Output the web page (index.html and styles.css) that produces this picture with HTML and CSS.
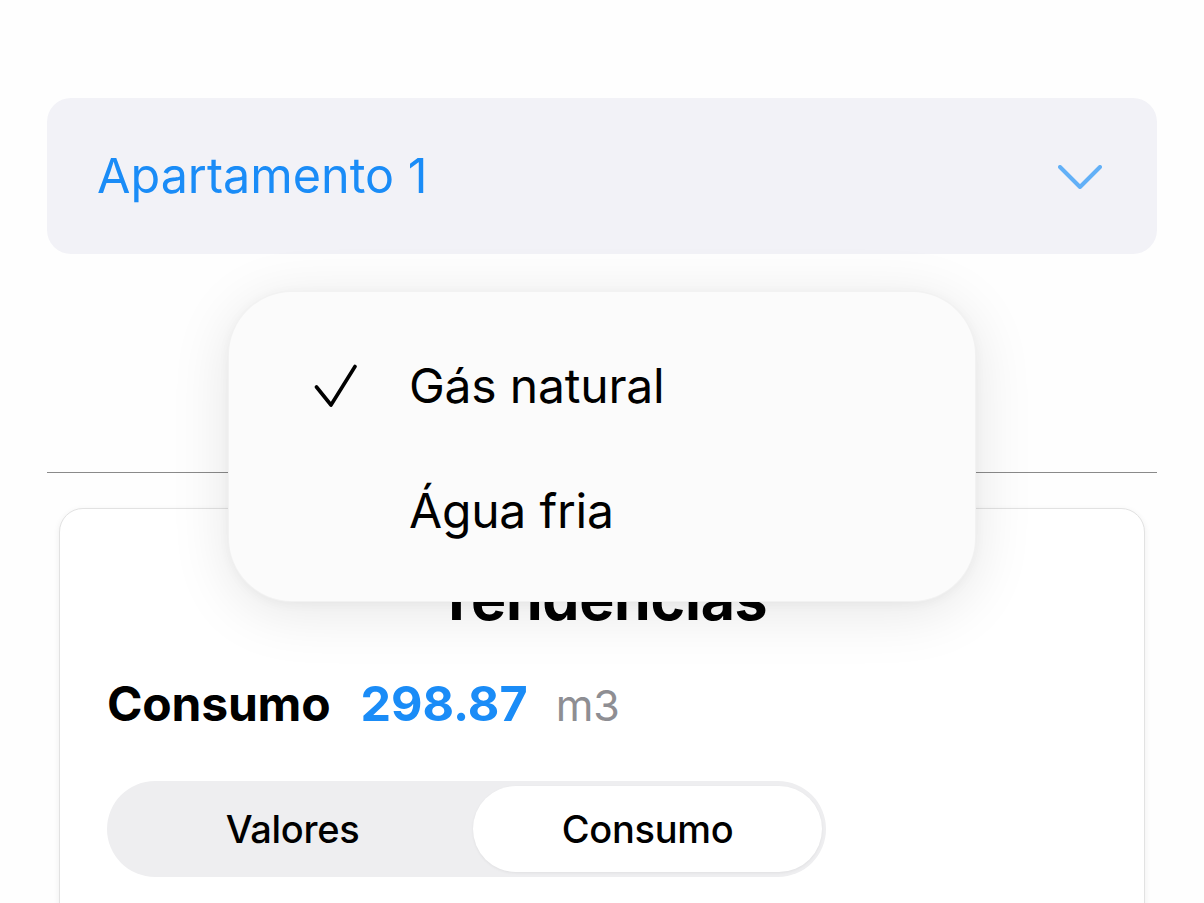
FILE: index.html
```html
<!DOCTYPE html>
<html lang="pt">
<head>
<meta charset="utf-8">
<title>Tendencias</title>
<link rel="stylesheet" href="styles.css">
</head>
<body>
<div class="screen">
  <div class="picker">
    <span class="picker-label">Apartamento 1</span>
    <svg class="chevron" width="44" height="24" viewBox="0 0 44 24"><path d="M2 2 L22 22 L42 2" fill="none" stroke="#62b0f7" stroke-width="4" stroke-linecap="round" stroke-linejoin="round"/></svg>
  </div>
  <div class="divider"></div>
  <div class="card">
    <h2 class="card-title">Tendencias</h2>
    <div class="summary">
      <span class="summary-label">Consumo</span>
      <span class="summary-value">298.87</span>
      <span class="summary-unit">m3</span>
    </div>
    <div class="segmented">
      <div class="segment">Valores</div>
      <div class="segment active">Consumo</div>
    </div>
  </div>
  <div class="menu">
    <div class="menu-item">
      <span class="menu-check"><svg width="44" height="44" viewBox="0 0 44 44"><path d="M2.5 23 L17 41 L41 2.5" fill="none" stroke="#000" stroke-width="3.6" stroke-linecap="round" stroke-linejoin="round"/></svg></span>
      <span class="menu-text">Gás natural</span>
    </div>
    <div class="menu-item">
      <span class="menu-check"></span>
      <span class="menu-text">Água fria</span>
    </div>
  </div>
</div>
</body>
</html>
```

FILE: styles.css
```css
html, body {
  margin: 0;
  padding: 0;
  background: #fefefe;
}
body {
  font-family: Inter, "Liberation Sans", sans-serif;
  color: #000;
  overflow: hidden;
  height: 903px;
}
.screen {
  position: relative;
  padding: 98px 47px 0 47px;
}
.picker {
  height: 156px;
  border-radius: 24px;
  background: #f2f2f7;
  display: flex;
  align-items: center;
  justify-content: space-between;
  padding: 0 55px 0 50px;
}
.picker-label {
  font-size: 48.5px;
  line-height: 58px;
  color: #1a8cf7;
}
.chevron {
  display: block;
  margin-top: 2px;
}
.divider {
  margin-top: 218px;
  height: 1px;
  background: #8a8a8a;
}
.card {
  margin: 35px 12px 0 12px;
  border: 1px solid #e2e2e2;
  border-radius: 24px;
  background: #fff;
  box-shadow: 0 2px 6px rgba(0, 0, 0, 0.07);
  padding: 60px 47px 40px 47px;
  height: 500px;
}
.card-title {
  margin: 0;
  text-align: center;
  font-size: 59px;
  line-height: 60px;
  font-weight: 700;
  letter-spacing: -0.3px;
}
.summary {
  margin-top: 46px;
  display: flex;
  align-items: baseline;
  line-height: 58px;
}
.summary-label {
  font-size: 48px;
  font-weight: 700;
  letter-spacing: -0.2px;
}
.summary-value {
  margin-left: 30px;
  font-size: 48.5px;
  font-weight: 700;
  color: #1a8cf7;
}
.summary-unit {
  margin-left: 28px;
  font-size: 43px;
  color: #8e8e93;
}
.segmented {
  margin-top: 47px;
  width: 719px;
  height: 96px;
  box-sizing: border-box;
  padding: 5px 4px 5px 5px;
  border-radius: 48px;
  background: #eeeef0;
  display: grid;
  grid-template-columns: 361px 1fr;
}
.segment {
  display: flex;
  align-items: center;
  justify-content: center;
  font-size: 38px;
  font-weight: 500;
  border-radius: 43px;
  letter-spacing: -0.3px;
}
.segment.active {
  background: #fff;
  box-shadow: 0 1px 3px rgba(0, 0, 0, 0.06);
}
.menu {
  position: absolute;
  left: 228px;
  top: 291px;
  width: 748px;
  height: 311px;
  box-sizing: border-box;
  padding: 31px 0 0 85px;
  border-radius: 64px;
  background: #fbfbfb;
  border: 1px solid rgba(0, 0, 0, 0.035);
  box-shadow: 0 10px 60px rgba(0, 0, 0, 0.1), 0 2px 12px rgba(0, 0, 0, 0.04);
}
.menu-item {
  height: 125px;
  display: flex;
  align-items: center;
}
.menu-check {
  width: 95px;
  height: 44px;
  flex: none;
}
.menu-check svg {
  display: block;
}
.menu-text {
  font-size: 48px;
  line-height: 58px;
  letter-spacing: -0.2px;
}
```
